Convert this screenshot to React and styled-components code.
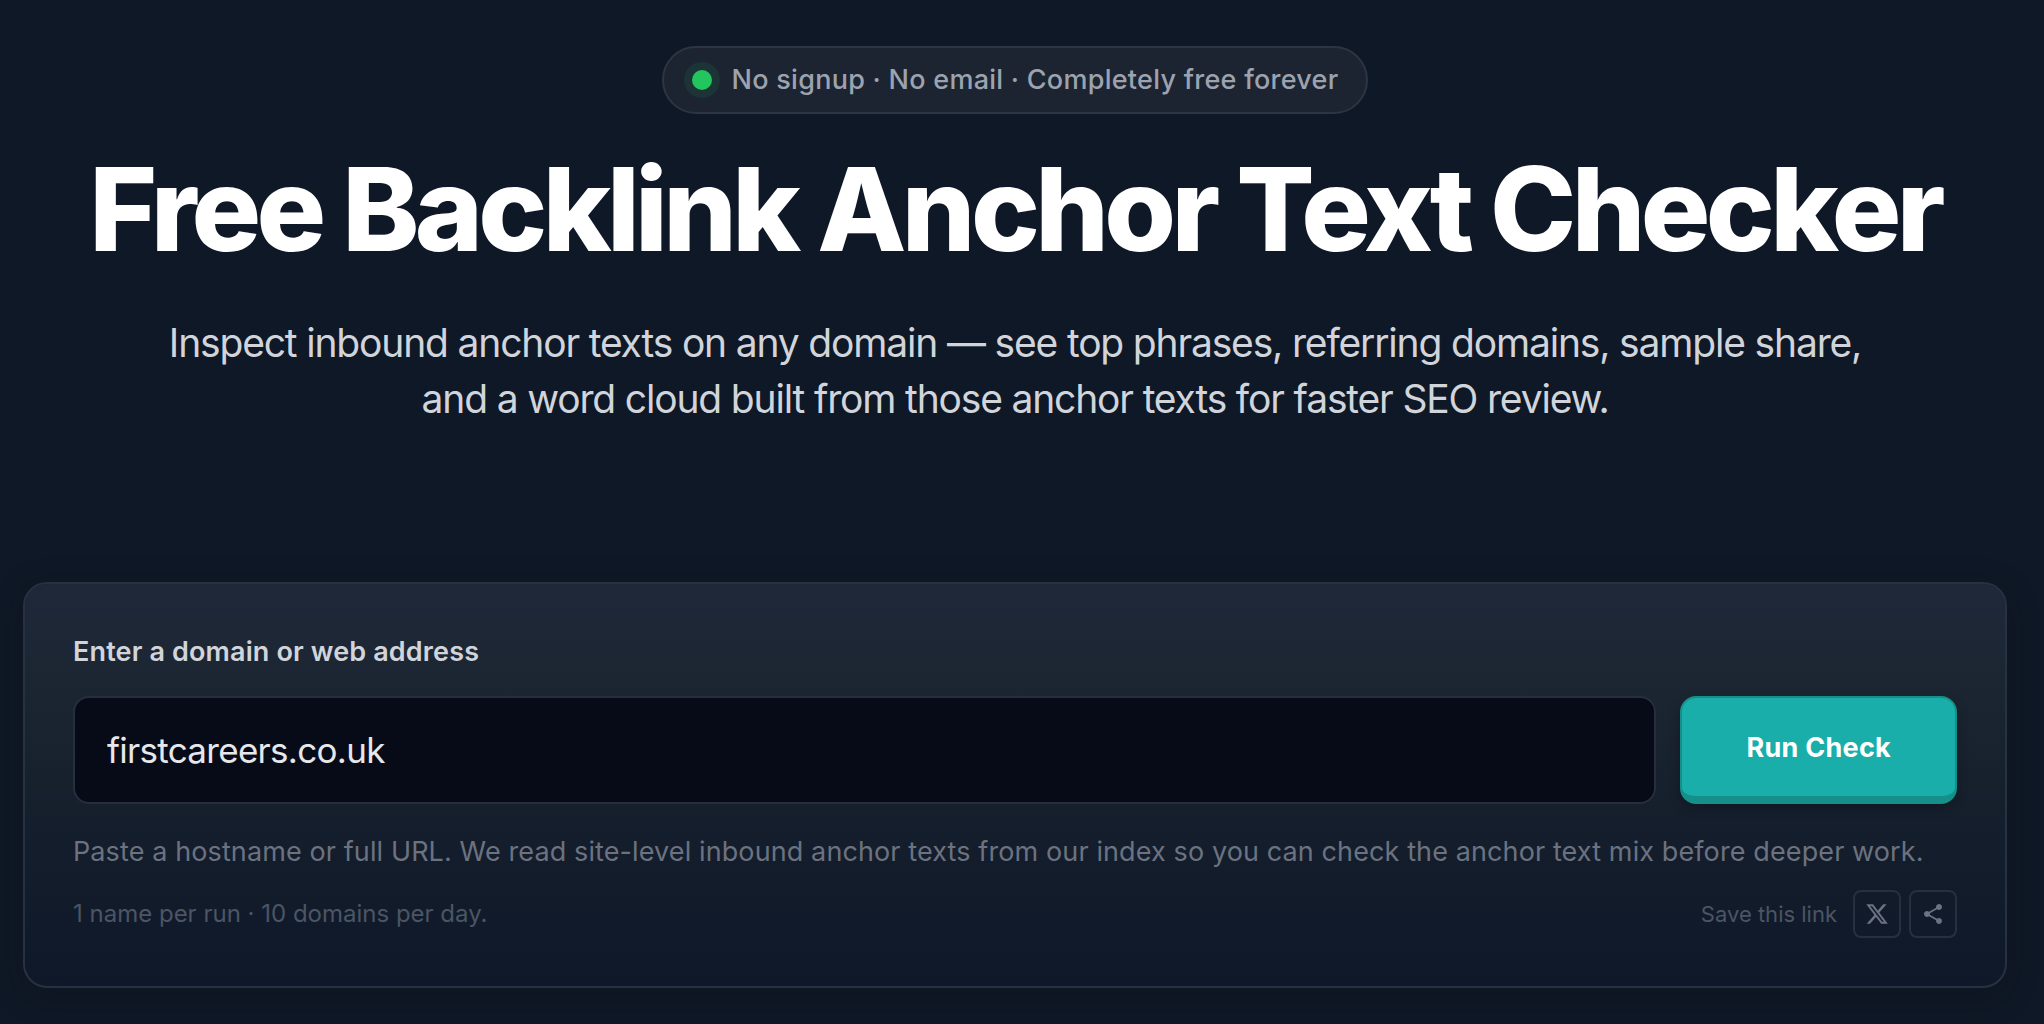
import React, { useState } from "react";
import styled, { createGlobalStyle } from "styled-components";

const GlobalStyle = createGlobalStyle`
  *, *::before, *::after {
    box-sizing: border-box;
  }

  body {
    margin: 0;
    background: #0f1826;
    font-family: Inter, "Liberation Sans", sans-serif;
    -webkit-font-smoothing: antialiased;
  }
`;

const Page = styled.main`
  display: flex;
  flex-direction: column;
  gap: 155px;
  padding: 46px 37px 36px 23px;
`;

const Hero = styled.header`
  display: flex;
  flex-direction: column;
  align-items: center;
  text-align: center;
`;

const Pill = styled.p`
  display: inline-flex;
  align-items: center;
  gap: 20px;
  margin: 0;
  padding: 12px 28px;
  border: 2px solid #2c3543;
  border-radius: 34px;
  background: #1c2431;
  color: #9ca3af;
  font-size: 27px;
  font-weight: 500;
  line-height: 40px;
  letter-spacing: 0.01em;
`;

const Dot = styled.span`
  width: 20px;
  height: 20px;
  border-radius: 50%;
  background: #22c55e;
  box-shadow: 0 0 0 8px rgba(34, 197, 94, 0.1);
`;

const Title = styled.h1`
  margin: 33px 0 44px;
  color: #fff;
  font-size: 116px;
  font-weight: 800;
  line-height: 124px;
  letter-spacing: -0.04em;
`;

const Lead = styled.p`
  max-width: 1760px;
  margin: 0;
  color: #d1d5db;
  font-size: 39px;
  line-height: 56px;
  letter-spacing: -0.03em;
`;

const Card = styled.form`
  display: flex;
  flex-direction: column;
  padding: 48px;
  border: 2px solid #273142;
  border-radius: 24px;
  background: linear-gradient(180deg, #1f2839 0%, #1b2531 30%, #151e2c 60%, #0f1829 100%);
  background-clip: padding-box;
  box-shadow: 0 8px 32px rgba(14, 18, 24, 0.3);
`;

const Label = styled.label`
  margin-bottom: 24px;
  color: #d1d5db;
  font-size: 27px;
  font-weight: 600;
  line-height: 40px;
  letter-spacing: 0.005em;
`;

const Fields = styled.div`
  display: flex;
  gap: 24px;
`;

const DomainInput = styled.input`
  flex: 1;
  min-width: 0;
  height: 108px;
  padding: 0 32px;
  border: 2px solid #262e3f;
  border-radius: 16px;
  outline: none;
  background: #070b17;
  color: #e5e7eb;
  font-family: inherit;
  font-size: 35px;
  letter-spacing: -0.02em;
`;

const RunButton = styled.button`
  padding: 0 64px;
  border: 2px solid #158f89;
  border-bottom-width: 8px;
  border-radius: 16px;
  background: #19aea9;
  box-shadow: 0 4px 12px rgba(0, 0, 0, 0.25);
  color: #fff;
  font-family: inherit;
  font-size: 27px;
  font-weight: 700;
  letter-spacing: 0.01em;
  cursor: pointer;
`;

const Hint = styled.p`
  margin: 25px 0 15px;
  color: #6b7280;
  font-size: 27px;
  line-height: 46px;
  letter-spacing: 0.004em;
`;

const Footer = styled.div`
  display: flex;
  align-items: center;
  justify-content: space-between;
`;

const Limits = styled.span`
  color: #4b5563;
  font-size: 24px;
  line-height: 36px;
`;

const Share = styled.div`
  display: flex;
  align-items: center;
  gap: 8px;
`;

const ShareText = styled.span`
  margin-right: 8px;
  color: #4b5563;
  font-size: 22px;
  line-height: 36px;
`;

const IconButton = styled.button`
  display: flex;
  align-items: center;
  justify-content: center;
  width: 48px;
  height: 48px;
  padding: 0;
  border: 2px solid #273040;
  border-radius: 8px;
  background: transparent;
  color: #6b7280;
  cursor: pointer;
`;

const XIcon = () => (
  <svg width="24" height="24" viewBox="0 0 24 24" fill="currentColor" aria-hidden="true">
    <path d="M18.244 2.25h3.308l-7.227 8.26 8.502 11.24H16.17l-5.214-6.817L4.99 21.75H1.68l7.73-8.835L1.254 2.25H8.08l4.713 6.231zm-1.161 17.52h1.833L7.084 4.126H5.117z" />
  </svg>
);

const ShareIcon = () => (
  <svg width="24" height="24" viewBox="0 0 24 24" fill="currentColor" aria-hidden="true">
    <path d="M18 16.08c-.76 0-1.44.3-1.96.77L8.91 12.7c.05-.23.09-.46.09-.7s-.04-.47-.09-.7l7.05-4.11c.54.5 1.25.81 2.04.81 1.66 0 3-1.34 3-3s-1.34-3-3-3-3 1.34-3 3c0 .24.04.47.09.7L8.04 9.81C7.5 9.31 6.79 9 6 9c-1.66 0-3 1.34-3 3s1.34 3 3 3c.79 0 1.5-.31 2.04-.81l7.12 4.16c-.05.21-.08.43-.08.65 0 1.61 1.31 2.92 2.92 2.92s2.92-1.31 2.92-2.92-1.31-2.92-2.92-2.92z" />
  </svg>
);

const App = () => {
  const [domain, setDomain] = useState("firstcareers.co.uk");

  return (
    <>
      <GlobalStyle />
      <Page>
        <Hero>
          <Pill>
            <Dot />
            No signup · No email · Completely free forever
          </Pill>
          <Title>Free Backlink Anchor Text Checker</Title>
          <Lead>
            Inspect inbound anchor texts on any domain — see top phrases, referring domains,
            sample share, and a word cloud built from those anchor texts for faster SEO review.
          </Lead>
        </Hero>

        <Card onSubmit={(e) => e.preventDefault()}>
          <Label htmlFor="domain">Enter a domain or web address</Label>
          <Fields>
            <DomainInput
              id="domain"
              type="text"
              spellCheck={false}
              value={domain}
              onChange={(e) => setDomain(e.target.value)}
            />
            <RunButton type="submit">Run Check</RunButton>
          </Fields>
          <Hint>
            Paste a hostname or full URL. We read site-level inbound anchor texts from our index
            so you can check the anchor text mix before deeper work.
          </Hint>
          <Footer>
            <Limits>1 name per run · 10 domains per day.</Limits>
            <Share>
              <ShareText>Save this link</ShareText>
              <IconButton type="button" aria-label="Share on X">
                <XIcon />
              </IconButton>
              <IconButton type="button" aria-label="Share">
                <ShareIcon />
              </IconButton>
            </Share>
          </Footer>
        </Card>
      </Page>
    </>
  );
};

export default App;
